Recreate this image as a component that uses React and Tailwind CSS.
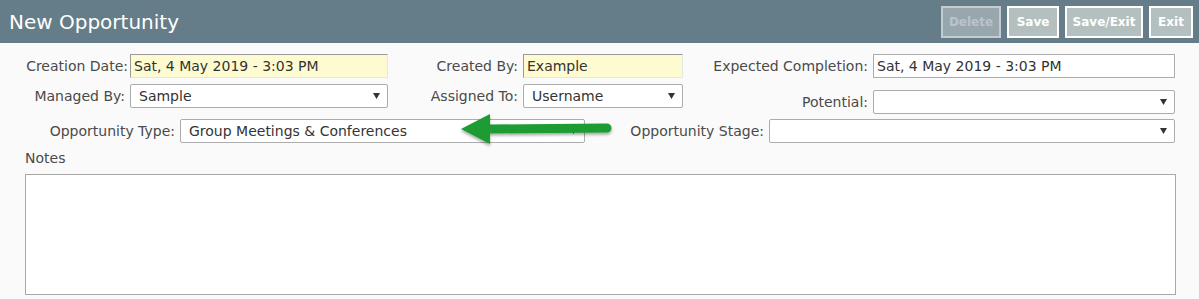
import React from 'react';

const font = { fontFamily: '"DejaVu Sans", Verdana, sans-serif' };

const Caret = () => (
  <svg width="7" height="6" viewBox="0 0 7 6" className="absolute right-[7px] top-1/2 -translate-y-1/2">
    <path d="M0 0 H7 L3.5 6 Z" fill="#333" />
  </svg>
);

const ReadOnly = ({ value, width }) => (
  <div
    className={`h-[24px] bg-[#fffbd1] border border-t-[#9a9a9a] border-l-[#9a9a9a] border-b-[#e6e6e6] border-r-[#e6e6e6] pl-[3px] flex items-center text-[#333] ${width}`}
  >
    {value}
  </div>
);

const Select = ({ value, width }) => (
  <div className={`relative h-[24px] bg-white border border-[#acacac] rounded-[2px] pl-[8px] flex items-center text-[#333] ${width}`}>
    {value}
    <Caret />
  </div>
);

const Label = ({ children, width }) => (
  <div className={`text-right text-[#4a4a4a] shrink-0 whitespace-nowrap ${width}`}>{children}</div>
);

const Arrow = () => (
  <svg width="170" height="48" viewBox="0 0 170 48" className="absolute left-[455px] top-[109px] pointer-events-none">
    <defs>
      <filter id="sh" x="-10%" y="-30%" width="120%" height="160%">
        <feDropShadow dx="0" dy="2" stdDeviation="1.5" floodColor="#000" floodOpacity="0.35" />
      </filter>
    </defs>
    <g filter="url(#sh)">
      <line x1="34" y1="20" x2="152" y2="19" stroke="#1c9c33" strokeWidth="9" strokeLinecap="round" />
      <path d="M6 20 L35 5 L35 35 Z" fill="#1c9c33" />
    </g>
  </svg>
);

export default function App() {
  return (
    <div className="w-[1199px] h-[299px] bg-[#fafafa] relative overflow-hidden text-[14px]" style={font}>
      <div className="h-[43px] bg-[#657c89] flex items-center justify-between pl-[9px] pr-[6px]">
        <div className="text-white text-[20px]">New Opportunity</div>
        <div className="flex gap-[6px] text-[12px] font-bold">
          <button className="w-[60px] h-[32px] bg-[#98a7ae] border-2 border-[#c3ccd0] text-[#bac4c8]">Delete</button>
          <button className="w-[52px] h-[32px] bg-[#b4c0bf] border-2 border-white text-white">Save</button>
          <button className="w-[78px] h-[32px] bg-[#b4c0bf] border-2 border-white text-white">Save/Exit</button>
          <button className="w-[44px] h-[32px] bg-[#b4c0bf] border-2 border-white text-white">Exit</button>
        </div>
      </div>

      <div className="pt-[11px]">
        <div className="flex items-center">
          <Label width="w-[128px]">Creation Date:</Label>
          <div className="ml-[2px]"><ReadOnly value="Sat, 4 May 2019 - 3:03 PM" width="w-[258px]" /></div>
          <Label width="w-[130px]">Created By:</Label>
          <div className="ml-[5px]"><ReadOnly value="Example" width="w-[160px]" /></div>
          <Label width="w-[185px]">Expected Completion:</Label>
          <div className="ml-[5px] h-[24px] w-[302px] bg-white border border-[#acacac] pl-[3px] flex items-center text-[#333]">
            Sat, 4 May 2019 - 3:03 PM
          </div>
        </div>

        <div className="flex items-start mt-[6px]">
          <div className="flex items-center">
            <Label width="w-[125px]">Managed By:</Label>
            <div className="ml-[5px]"><Select value="Sample" width="w-[258px]" /></div>
          </div>
          <div className="flex items-center">
            <Label width="w-[130px]">Assigned To:</Label>
            <div className="ml-[5px]"><Select value="Username" width="w-[160px]" /></div>
          </div>
          <div className="flex items-center pt-[6px]">
            <Label width="w-[185px]">Potential:</Label>
            <div className="ml-[5px]"><Select value="" width="w-[302px]" /></div>
          </div>
        </div>

        <div className="flex items-center mt-[5px]">
          <Label width="w-[175px]">Opportunity Type:</Label>
          <div className="ml-[5px]"><Select value="Group Meetings & Conferences" width="w-[405px]" /></div>
          <Label width="w-[179px]">Opportunity Stage:</Label>
          <div className="ml-[5px]"><Select value="" width="w-[406px]" /></div>
        </div>

        <div className="pl-[25px] mt-[6px] leading-[18px] text-[#4a4a4a]">Notes</div>
        <div className="ml-[25px] mt-[7px] w-[1151px] h-[121px] bg-white border border-[#a8a8a8]" />
      </div>

      <Arrow />
    </div>
  );
}
